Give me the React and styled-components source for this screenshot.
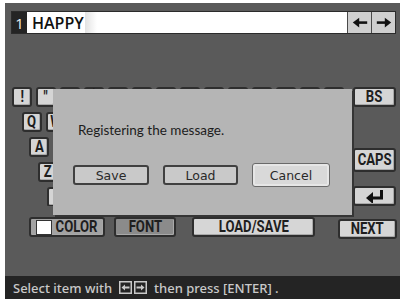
import styled, { createGlobalStyle } from "styled-components";

const GlobalStyle = createGlobalStyle`
  * { margin: 0; padding: 0; box-sizing: border-box; }
  body { background: #fff; width: 403px; height: 303px; overflow: hidden; }
`;

const Screen = styled.div`
  position: relative;
  width: 395px;
  height: 296px;
  margin: 3px 0 0 5px;
  background: #5a5a5a;
  display: flex;
  flex-direction: column;
  font-family: Roboto, "DejaVu Sans Condensed", sans-serif;
`;

const TopBar = styled.div`
  display: flex;
  height: 23px;
  margin: 8px 4px 0 6px;
  border: 1px solid #2b2b2b;
`;

const IndexBox = styled.div`
  width: 15px;
  background: #242424;
  color: #f0f0f0;
  font: 500 15px "Open Sans", sans-serif;
  display: flex;
  align-items: center;
  justify-content: center;
`;

const Field = styled.div`
  flex: 1;
  background: #fff;
  display: flex;
  align-items: center;
  padding-left: 5px;
  font: 600 16px "Open Sans", sans-serif;
  color: #111;
`;

const Cursor = styled.span`
  width: 12px;
  height: 21px;
  margin-left: 1px;
  background: linear-gradient(90deg, #e2e2e2, #fff);
`;

const ArrowButton = styled.div`
  width: 24px;
  background: #cfcfcf;
  border-left: 1px solid #4a4a4a;
  display: flex;
  align-items: center;
  justify-content: center;
`;

const Keyboard = styled.div`
  display: flex;
  height: 119px;
  margin-top: 53px;
  padding: 0 4px 0 7px;
`;

const KeyRows = styled.div`
  flex: 1;
  display: flex;
  flex-direction: column;
  gap: 5px;
  overflow: hidden;
`;

const KeyRow = styled.div`
  display: flex;
  gap: 4px;
  padding-left: ${(p) => p.$indent}px;
`;

const Key = styled.div`
  flex: none;
  width: ${(p) => p.$w || 20}px;
  height: ${(p) => p.$h || 20}px;
  margin-top: ${(p) => p.$top || 0}px;
  background: ${(p) => p.$bg || "#d5d5d5"};
  border: 2px solid #2e2e2e;
  border-radius: 3px;
  box-shadow: inset -1px -1px 0 #a9a9a9;
  display: flex;
  align-items: center;
  justify-content: center;
  color: #1e1e1e;
  font-weight: bold;
  font-size: 16px;
  line-height: 1;
`;

const Label = styled.span`
  display: inline-block;
  transform: scaleX(0.82);
  margin: 0 -6px;
`;

const SideKeys = styled.div`
  width: 43px;
  display: flex;
  flex-direction: column;
`;

const BottomRow = styled.div`
  display: flex;
  align-items: flex-start;
  margin-top: 11px;
  padding-left: 24px;
`;

const Spacer = styled.div`
  width: ${(p) => p.$w}px;
`;

const Swatch = styled.span`
  width: 16px;
  height: 15px;
  margin: 0 5px 0 -2px;
  background: #fff;
  border: 1px solid #333;
`;

const StatusBar = styled.div`
  margin-top: auto;
  height: 23px;
  background: #242424;
  color: #c9c9c9;
  font: 500 13px "Noto Sans", sans-serif;
  display: flex;
  align-items: center;
  gap: 4px;
  padding-left: 8px;
`;

const KeyHint = styled.span`
  display: flex;
  gap: 2px;
  margin: 0 3px;
`;

const Dialog = styled.div`
  position: absolute;
  left: 48px;
  top: 86px;
  width: 299px;
  height: 126px;
  background: #b5b5b5;
  box-shadow: 2px 2px 0 #353535;
  display: flex;
  flex-direction: column;
`;

const Message = styled.div`
  margin-top: 33px;
  padding-left: 25px;
  line-height: 16px;
  font: 13.5px Lato, "Open Sans", sans-serif;
  color: #1c1c1c;
`;

const DialogButtons = styled.div`
  display: flex;
  align-items: center;
  gap: 14px;
  margin-top: 25px;
  padding-left: 20px;
`;

const DialogButton = styled.div`
  width: ${(p) => p.$w}px;
  height: ${(p) => (p.$focus ? 24 : 20)}px;
  background: ${(p) => (p.$focus ? "#d9d9d9" : "#c9c9c9")};
  border: ${(p) => (p.$focus ? "1px solid #6a6a6a" : "2px solid #404040")};
  border-radius: 3px;
  box-shadow: ${(p) => (p.$focus ? "inset 0 0 0 2px #e6e6e6" : "none")};
  display: flex;
  align-items: center;
  justify-content: center;
  font: 12.5px "DejaVu Sans", sans-serif;
  color: #2a2a2a;
`;

const LeftArrow = ({ color = "#111", size = 16 }) => (
  <svg width={size} height={size * 0.7} viewBox="0 0 20 14">
    <path d="M7 7 H19" stroke={color} strokeWidth="3.2" />
    <path d="M1 7 L9 1 V13 Z" fill={color} />
  </svg>
);

const RightArrow = ({ color = "#111", size = 16 }) => (
  <svg width={size} height={size * 0.7} viewBox="0 0 20 14">
    <path d="M1 7 H13" stroke={color} strokeWidth="3.2" />
    <path d="M19 7 L11 1 V13 Z" fill={color} />
  </svg>
);

const EnterIcon = () => (
  <svg width="20" height="13" viewBox="0 0 20 13">
    <path d="M16.5 0 V8 H7" stroke="#111" strokeWidth="3" fill="none" />
    <path d="M1 8 L8 2 V14 Z" fill="#111" />
  </svg>
);

const HintKey = ({ dir }) => (
  <svg width="13" height="13" viewBox="0 0 13 13">
    <rect x="0.75" y="0.75" width="11.5" height="11.5" fill="none" stroke="#c9c9c9" strokeWidth="1.5" />
    {dir === "left" ? (
      <>
        <path d="M5 6.5 H10.5" stroke="#c9c9c9" strokeWidth="2" />
        <path d="M2.5 6.5 L6 3.5 V9.5 Z" fill="#c9c9c9" />
      </>
    ) : (
      <>
        <path d="M2.5 6.5 H8" stroke="#c9c9c9" strokeWidth="2" />
        <path d="M10.5 6.5 L7 3.5 V9.5 Z" fill="#c9c9c9" />
      </>
    )}
  </svg>
);

const rows = [
  { indent: 0, keys: ["!", '"', "#", "$", "%", "&", "'", "(", ")", "~", "=", "|", "`", "^"] },
  { indent: 10, keys: ["Q", "W", "E", "R", "T", "Y", "U", "I", "O", "P", "@", "[", "{"] },
  { indent: 17, keys: ["A", "S", "D", "F", "G", "H", "J", "K", "L", ";", ":", "]"] },
  { indent: 26, keys: ["Z", "X", "C", "V", "B", "N", "M", ",", ".", "/", "?"] },
  { indent: 35, keys: [" "], wide: 220 },
];

export default function App() {
  return (
    <>
      <GlobalStyle />
      <Screen>
        <TopBar>
          <IndexBox>1</IndexBox>
          <Field>
            HAPPY
            <Cursor />
          </Field>
          <ArrowButton>
            <LeftArrow />
          </ArrowButton>
          <ArrowButton>
            <RightArrow />
          </ArrowButton>
        </TopBar>

        <Keyboard>
          <KeyRows>
            {rows.map((row, i) => (
              <KeyRow key={i} $indent={row.indent}>
                {row.keys.map((k, j) => (
                  <Key key={j} $w={row.wide}>
                    <Label>{k}</Label>
                  </Key>
                ))}
              </KeyRow>
            ))}
          </KeyRows>
          <SideKeys>
            <Key $w={43}>
              <Label>BS</Label>
            </Key>
            <Key $w={43} $h={24} $top={41}>
              <Label>CAPS</Label>
            </Key>
            <Key $w={43} $top={14}>
              <EnterIcon />
            </Key>
          </SideKeys>
        </Keyboard>

        <BottomRow>
          <Key $w={76} $bg="#a3a3a3">
            <Swatch />
            <Label>COLOR</Label>
          </Key>
          <Spacer $w={9} />
          <Key $w={62} $bg="#8b8b8b">
            <Label>FONT</Label>
          </Key>
          <Spacer $w={16} />
          <Key $w={123} $bg="#d6d6d6">
            <Label>LOAD/SAVE</Label>
          </Key>
          <Spacer $w={23} />
          <Key $w={59} $top={2} $bg="#d6d6d6">
            <Label>NEXT</Label>
          </Key>
        </BottomRow>

        <StatusBar>
          Select item with
          <KeyHint>
            <HintKey dir="left" />
            <HintKey dir="right" />
          </KeyHint>
          then press [ENTER] .
        </StatusBar>

        <Dialog>
          <Message>Registering the message.</Message>
          <DialogButtons>
            <DialogButton $w={76}>Save</DialogButton>
            <DialogButton $w={75}>Load</DialogButton>
            <DialogButton $w={78} $focus>
              Cancel
            </DialogButton>
          </DialogButtons>
        </Dialog>
      </Screen>
    </>
  );
}
